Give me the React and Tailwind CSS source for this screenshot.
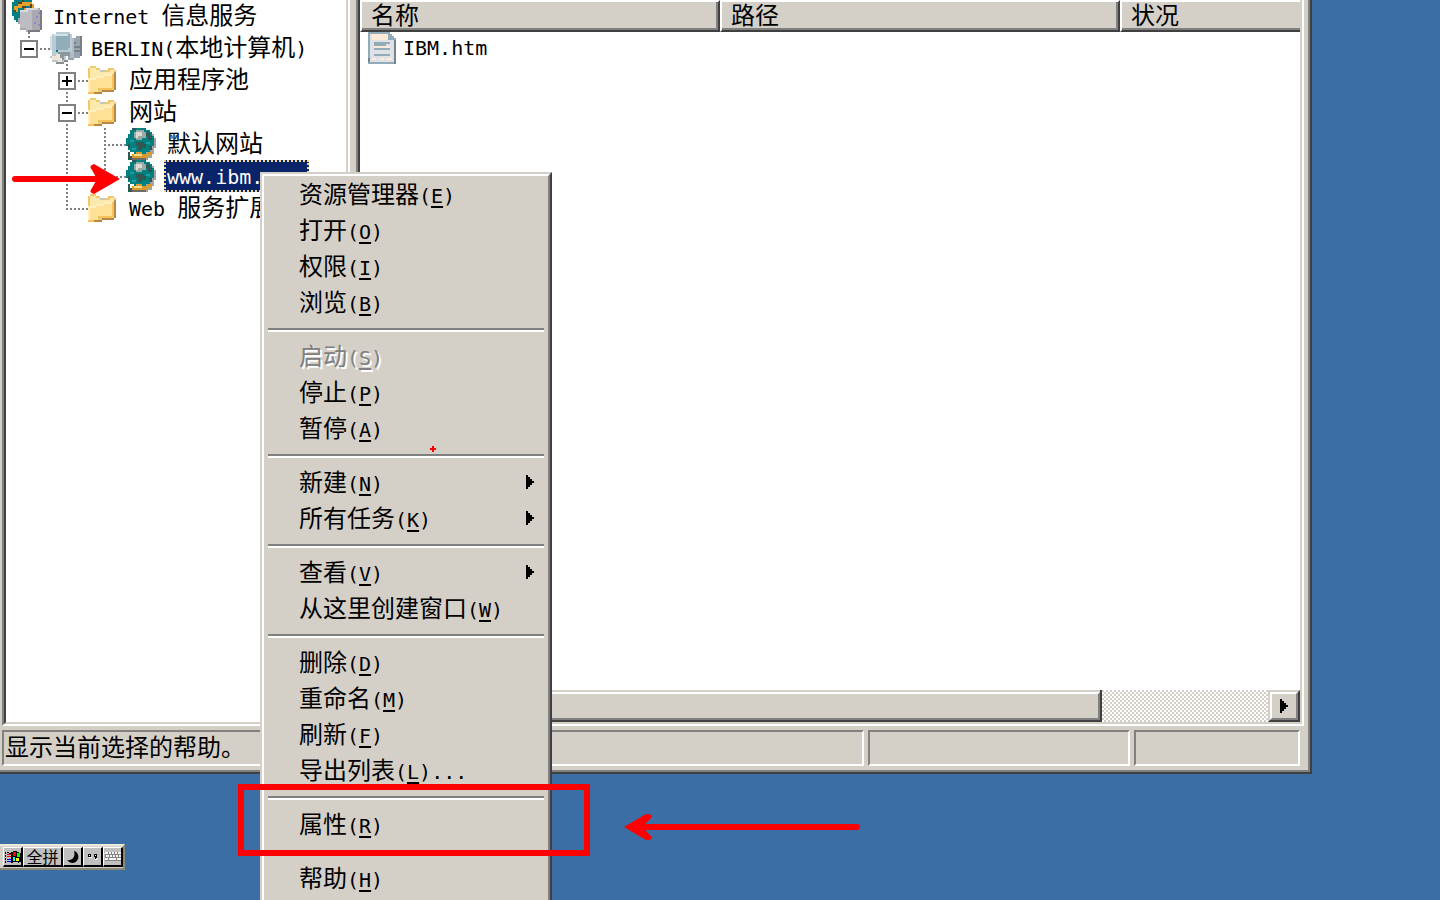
import React, { useState } from "react";

const LATIN = "font-['DejaVu_Sans_Mono','Liberation_Mono',monospace] text-[20px]";

// latin runs take half-width cells, chinese runs take full-width cells
const Mixed = ({ text }) => (
  <>
    {text.split(/([\x20-\x7e]+)/).filter(Boolean).map((part, i) =>
      /^[\x20-\x7e]/.test(part) ? (
        <span key={i} className={`${LATIN} whitespace-pre`}>{part}</span>
      ) : (
        <span key={i}>{part}</span>
      )
    )}
  </>
);

/* ---------- icons ---------- */

const FolderIcon = () => (
  <svg viewBox="0 0 16 16" className="size-8 shrink-0" shapeRendering="crispEdges" aria-hidden="true">
    <path d="M0 2h1V1h3v1h2v1h4V2h3v1h1v10h-1v1H7v1H0z" fill="#f5c76b" />
    <path d="M1 2h3v1h2v1h5V3h2v2H8v1H4v1H1z" fill="#fbe9ae" />
    <path d="M1 7h3V6h4V5h5v7h-2v1H5v1H1z" fill="#fee196" />
    <path d="M0 7h1v7H0zM1 7h3v1H1zM4 6h4v1H4zM8 5h4v1H8z" fill="#fff0bf" />
    <path d="M13 4h1v9h-1zM7 13h6v1H7zM2 14h5v1H2z" fill="#b98846" />
    <path d="M12 5h1v7h-1zM5 12h7v1H5zM0 14h3v1H0z" fill="#f6c25f" />
    <path d="M6 3h3v1H6z" fill="#c9c6bd" />
  </svg>
);

const GlobeIcon = () => (
  <svg viewBox="0 0 16 16" className="size-8 shrink-0" shapeRendering="crispEdges" aria-hidden="true">
    <path d="M10 1h2v1h1v1h1v2h1v5h-1v3h-1v2h-2v1H4v-3h6z" fill="#a3a3a6" />
    <path d="M4 0h6v1h2v1h1v2h1v5h-1v2h-1v1h-2v1H4v-1H2v-1H1V9H0V5h1V3h1V1h2z" fill="#008080" />
    <path d="M3 0h2v1H3zM10 2h2v2h1v2h-2V4h-1zM5 7h4v1h1v2H8v1H6V9H5zM1 8h1v2H1zM12 9h1v2h-1zM1 12h1v4H1zM2 14h1v2H2z" fill="#2f5950" />
    <path d="M4 2h1V1h4v1h1v3H8v1H5V5H4z" fill="#9aa9a4" />
    <path d="M5 2h3v2H6v1H5z" fill="#dddcd4" />
    <path d="M2 6h2v1H2zM10 7h2v1h-2zM3 10h2v1H3z" fill="#1aa0a0" />
    <path d="M3 13h2v-1h3v1h3v-1h2v2h-2v1H3z" fill="#d99a2b" />
    <path d="M4 13h4v1H4z" fill="#f8dc8c" />
    <path d="M3 15h7v1H3z" fill="#6d6d66" />
  </svg>
);

const ServerIcon = () => (
  <svg viewBox="0 0 16 16" className="size-8 shrink-0" shapeRendering="crispEdges" aria-hidden="true">
    <path d="M0 1h1V0h9v2h1v3H4v6H2v-1H1V8H0z" fill="#008080" />
    <path d="M1 5V3h2V2h2V1h5v1h1v2H9V3H7v2H6V4H3v2H2V5z" fill="#e8a02a" />
    <path d="M3 1h2V0h1v1H5v1H3zM5 3h2v1H5zM9 2h1v2H9zM1 5h1v1H1z" fill="#5a4326" />
    <path d="M3 9h1V5h3V4h7v1h1v10h-1v1H7v-1H4v-3H3z" fill="#a9a9af" />
    <path d="M4 6h4V5h2v10H7v-1H4z" fill="#bcbcc2" />
    <path d="M7 4h6v1H8v1H4V5h3z" fill="#d8d8de" />
    <path d="M14 5h1v10h-1zM8 15h6v1H8z" fill="#7b7b82" />
    <path d="M13 6h1v1h-1zM12 8h1v1h-1zM11 11h1v1h-1zM13 12h1v1h-1z" fill="#8d86e0" />
  </svg>
);

const ComputerIcon = () => (
  <svg viewBox="0 0 16 16" className="size-8 shrink-0" shapeRendering="crispEdges" aria-hidden="true">
    <path d="M9 3h4V2h3v10h-1v1h-3v1H9z" fill="#98a4ad" />
    <path d="M15 2h1v10h-1zM12 5h1v1h-1zM12 7h3v1h-3zM12 9h3v1h-3z" fill="#75808a" />
    <path d="M10 3h2v10h-2z" fill="#b0bbc3" />
    <path d="M1 1h2V0h7v1h1v9h-1v2H8v3H6v1H3v-1H1v-2H0v-1h1V9H0V2h1z" fill="#b9cbd3" />
    <path d="M3 2h6V1h1v7H9v1H3z" fill="#92adba" />
    <path d="M0 2h1v7H0zM2 1h7v1H2z" fill="#d5e0e4" />
    <path d="M3 9h1v1H3z" fill="#008080" />
    <path d="M4 10h6v2H7v2H5v-2H4z" fill="#8b989e" />
    <path d="M1 12h2v-1h2v2h1v2H4v-1H1z" fill="#efe5d6" />
    <path d="M3 15h4v-1h2v1H7v1H3z" fill="#8d8d8d" />
  </svg>
);

const PageIcon = () => (
  <svg viewBox="0 0 14 16" className="h-8 w-7 shrink-0" shapeRendering="crispEdges" aria-hidden="true">
    <path d="M0 0h11v1h1v1h1v1h1v13H0z" fill="#92abb8" />
    <path d="M1 1h9v3h3v11H1z" fill="#dfe1e6" />
    <path d="M2 1h8v3H2zM3 7h8v1H3zM2 13h2v1H2zM6 13h2v1H6zM9 13h3v1H9z" fill="#fdebd8" />
    <path d="M3 5h8v2H3zM3 8h8v1H3zM3 11h8v1H3z" fill="#92abb8" />
    <path d="M9 6h2v1H9z" fill="#dfe1e6" />
    <path d="M13 4h1v12h-1z" fill="#75858f" />
    <path d="M0 13h1v2H0z" fill="#75858f" />
  </svg>
);

const RightTriangle = () => (
  <svg viewBox="0 0 4 7" className="h-[14px] w-2" shapeRendering="crispEdges" aria-hidden="true">
    <path d="M0 0h1v1h1v1h1v1h1v1H3v1H2v1H1v1H0z" />
  </svg>
);

/* ---------- tree ---------- */

const GUIDES = {
  blank: [],
  pipe: ["M17 0V32"],
  tee: ["M17 0V32", "M20 17H38"],
  elbow: ["M17 0V17", "M16 17H38"],
  cut: ["M17 0V12", "M20 17H38"],
};

const Guide = ({ kind }) => (
  <svg viewBox="0 0 38 32" className="h-8 w-[38px] shrink-0" shapeRendering="crispEdges" aria-hidden="true">
    {GUIDES[kind].map((d) => (
      <path key={d} d={d} stroke="#808080" strokeWidth="2" strokeDasharray="2 2" fill="none" />
    ))}
  </svg>
);

const Toggle = ({ open, last, label }) => (
  <button type="button" aria-label={label} aria-expanded={open} className="h-8 w-[38px] shrink-0">
    <svg viewBox="0 0 38 32" className="h-8 w-[38px]" shapeRendering="crispEdges">
      <path d={last ? "M17 0V8" : "M17 0V32"} stroke="#808080" strokeWidth="2" strokeDasharray="2 2" />
      <path d="M28 17H38" stroke="#808080" strokeWidth="2" strokeDasharray="2 2" />
      <rect x="9" y="9" width="16" height="16" fill="#fff" stroke="#808080" strokeWidth="2" />
      <path d={open ? "M12 17H22" : "M12 17H22M17 12V22"} stroke="#000" strokeWidth="2" />
    </svg>
  </button>
);

const TREE = [
  { text: "Internet 信息服务", Icon: ServerIcon, guides: [] },
  { text: "BERLIN(本地计算机)", Icon: ComputerIcon, guides: [], open: true, last: true },
  { text: "应用程序池", Icon: FolderIcon, guides: ["blank"], open: false },
  { text: "网站", Icon: FolderIcon, guides: ["blank"], open: true },
  { text: "默认网站", Icon: GlobeIcon, guides: ["blank", "pipe", "tee"] },
  { text: "www.ibm.com", Icon: GlobeIcon, guides: ["blank", "pipe", "cut"] },
  { text: "Web 服务扩展", Icon: FolderIcon, guides: ["blank", "elbow"] },
];

const TreePanel = () => {
  const [selected] = useState("www.ibm.com");

  return (
    <div className="w-[348px] shrink-0 border-2 border-t-0 border-[#808080] border-r-white border-b-white">
      <ul className="h-full overflow-hidden border-2 border-t-0 border-[#404040] border-r-[#d4d0c8] border-b-[#d4d0c8] bg-white pl-[6px]">
        {TREE.map(({ text, Icon, guides, open, last }) => (
          <li key={text} className="flex h-8 items-center">
            {guides.map((kind, i) => (
              <Guide key={i} kind={kind} />
            ))}
            {open !== undefined && <Toggle open={open} last={last} label={text} />}
            <Icon />
            <span
              className={
                text === selected
                  ? "ml-[6px] h-8 border-2 border-dotted border-[#f6d98c] bg-[#0a246a] pr-2 pl-px leading-6 whitespace-nowrap text-white"
                  : "ml-[6px] h-8 px-[3px] leading-7 whitespace-nowrap"
              }
            >
              <Mixed text={text} />
            </span>
          </li>
        ))}
      </ul>
    </div>
  );
};

/* ---------- file list ---------- */

const TH = "h-8 border-t-2 border-b-2 border-l-2 border-t-white border-l-white border-b-[#404040] p-0 text-left font-normal";
const TH_EDGE = "border-r-2 border-r-[#404040]";
const TH_INNER = "block h-7 border-b-2 border-[#808080] pl-[9px] leading-6";

const ListPanel = () => (
  <div className="min-w-0 flex-1 border-2 border-t-0 border-[#808080] border-r-white border-b-white">
    <div className="flex h-full flex-col border-2 border-t-0 border-[#404040] border-r-[#d4d0c8] border-b-[#d4d0c8] bg-white">
      <table className="w-full table-fixed border-separate border-spacing-0">
        <thead className="bg-[#d4d0c8]">
          <tr>
            <th className={`${TH} ${TH_EDGE} w-[360px]`}><span className={`${TH_INNER} border-r-2`}>名称</span></th>
            <th className={`${TH} ${TH_EDGE} w-[400px]`}><span className={`${TH_INNER} border-r-2`}>路径</span></th>
            <th className={TH}><span className={TH_INNER}>状况</span></th>
          </tr>
        </thead>
        <tbody>
          <tr>
            <td className="h-8 p-0">
              <div className="flex h-8 items-center gap-[7px] pl-2">
                <PageIcon />
                <Mixed text="IBM.htm" />
              </div>
            </td>
            <td />
            <td />
          </tr>
        </tbody>
      </table>

      <div className="mt-auto flex h-8 bg-[repeating-conic-gradient(#d4d0c8_0_25%,#ffffff_0_50%)] bg-[length:4px_4px]">
        <div className="w-[742px] border-r-2 border-b-2 border-[#404040]">
          <div className="h-full border-t-2 border-[#d4d0c8]">
            <div className="h-full border-t-2 border-r-2 border-b-2 border-t-white border-r-[#808080] border-b-[#808080] bg-[#d4d0c8]" />
          </div>
        </div>
        <button
          type="button"
          aria-label="向右滚动"
          className="ml-auto size-8 border-2 border-[#d4d0c8] border-r-[#404040] border-b-[#404040]"
        >
          <span className="flex h-full items-center border-2 border-white border-r-[#808080] border-b-[#808080] bg-[#d4d0c8] pl-2">
            <RightTriangle />
          </span>
        </button>
      </div>
    </div>
  </div>
);

const StatusCell = ({ className, children }) => (
  <div className={`h-9 border-2 border-[#808080] border-r-white border-b-white leading-7 ${className}`}>
    {children}
  </div>
);

/* ---------- context menu ---------- */

const MENU = [
  [
    { text: "资源管理器", hot: "E" },
    { text: "打开", hot: "O" },
    { text: "权限", hot: "I" },
    { text: "浏览", hot: "B" },
  ],
  [
    { text: "启动", hot: "S", disabled: true },
    { text: "停止", hot: "P" },
    { text: "暂停", hot: "A" },
  ],
  [
    { text: "新建", hot: "N", sub: true },
    { text: "所有任务", hot: "K", sub: true },
  ],
  [
    { text: "查看", hot: "V", sub: true },
    { text: "从这里创建窗口", hot: "W" },
  ],
  [
    { text: "删除", hot: "D" },
    { text: "重命名", hot: "M" },
    { text: "刷新", hot: "F" },
    { text: "导出列表", hot: "L", more: "..." },
  ],
  [{ text: "属性", hot: "R" }],
  [{ text: "帮助", hot: "H" }],
];

const ContextMenu = () => (
  <div
    role="menu"
    className="absolute top-[172px] left-[260px] w-[292px] border-2 border-[#d4d0c8] border-r-[#404040] border-b-[#404040]"
  >
    <div className="border-2 border-white border-r-[#808080] border-b-[#808080] bg-[#d4d0c8] px-1 py-[2px]">
      {MENU.map((group, g) => (
        <React.Fragment key={g}>
          {g > 0 && <div role="separator" className="mt-[6px] mb-2 h-1 border-t-2 border-b-2 border-t-[#808080] border-b-white" />}
          {group.map(({ text, hot, disabled, sub, more }) => (
            <button
              key={text}
              type="button"
              role="menuitem"
              disabled={disabled}
              className="flex h-9 w-full items-center pr-[10px] pb-1 pl-[31px] text-left leading-8 whitespace-nowrap disabled:text-[#808080] disabled:[text-shadow:2px_2px_0_#fff]"
            >
              <span>
                {text}
                <span className={LATIN}>
                  (<span className="underline decoration-2 underline-offset-[3px]">{hot}</span>){more}
                </span>
              </span>
              {sub && <span className="ml-auto"><RightTriangle /></span>}
            </button>
          ))}
        </React.Fragment>
      ))}
    </div>
  </div>
);

/* ---------- input method bar ---------- */

const IME_BTN =
  "flex h-5 items-center justify-center border-t border-r-2 border-b-2 border-l border-t-white border-l-white border-r-black border-b-black bg-[#c0c0c0]";

const ImeBar = () => (
  <div className="flex w-[125px] border-2 border-l-0 border-[#ece9d8] border-r-[#8b8878] border-b-[#8b8878] bg-[#d4d0c8] py-px pl-[3px]">
    <button type="button" aria-label="输入法" className={`${IME_BTN} w-5`}>
      <svg viewBox="0 0 16 14" className="h-[14px] w-4 shrink-0" shapeRendering="crispEdges">
        <path d="M6 2h2V1h4v1h2v1h2v9h-2v1h-1v-1H8v1H6z" />
        <path d="M8 2h3v4H8z" fill="#f00" />
        <path d="M12 3h3v4h-3z" fill="#0f0" />
        <path d="M8 7h2v4H8z" fill="#0ff" />
        <path d="M11 8h3v3h-3z" fill="#ff0" />
        <path d="M2 4h4v1H2zM2 6h4v1H2z" fill="#f00" />
        <path d="M2 9h4v1H2zM2 11h4v1H2z" fill="#00f" />
        <path d="M0 2h1v2H0zM0 5h1v2H0zM0 8h1v2H0zM0 11h1v2H0zM2 2h2v1H2zM4 3h2v1H4z" />
      </svg>
    </button>
    <button type="button" className={`${IME_BTN} w-10 pb-px text-[16px] leading-4`}>全拼</button>
    <button type="button" aria-label="半角" className={`${IME_BTN} w-5`}>
      <svg viewBox="0 0 12 12" className="size-3"><path d="M7 0c4 1 5 5 4 8-2 5-8 5-11 1 4 1 9-2 7-9z" /></svg>
    </button>
    <button type="button" aria-label="中文标点" className={`${IME_BTN} w-5`}>
      <svg viewBox="0 0 12 8" className="h-2 w-3" shapeRendering="crispEdges">
        <path d="M1 1h3v3H1zM7 1h3v4H9v1H8V4H7z" />
        <path d="M2 2h1v1H2zM8 2h1v1H8zM2 4h3v1H2zM10 5h1v1h-1v1H8V6h2z" fill="#fff" />
      </svg>
    </button>
    <button type="button" aria-label="软键盘" className={`${IME_BTN} w-5`}>
      <svg viewBox="0 0 16 10" className="h-[10px] w-4 shrink-0" shapeRendering="crispEdges">
        <path d="M0 0h16v10H0z" fill="#858585" />
        <path d="M0 0h3v2H0zM4 0h2v2H4zM7 0h2v2H7zM10 0h2v2h-2zM13 0h3v2h-3zM1 3h3v2H1zM5 3h2v2H5zM8 3h2v2H8zM11 3h2v2h-2zM14 3h2v2h-2zM0 6h3v2H0zM4 6h7v2H4zM12 6h4v2h-4z" fill="#f4f4f4" />
        <path d="M0 9h16v1H0z" fill="#c0c0c0" />
      </svg>
    </button>
  </div>
);

/* ---------- red marks ---------- */

const Marks = () => (
  <>
    <svg viewBox="0 0 108 32" className="absolute top-[163px] left-3 h-8 w-[108px]" aria-hidden="true">
      <path d="M3 16H98" stroke="#f00" strokeWidth="6" strokeLinecap="round" />
      <path d="M108 16 82 31q-6-2-2-6l5-9-5-9q-4-4 2-6z" fill="#f00" />
    </svg>
    <svg viewBox="0 0 236 28" className="absolute top-[813px] left-[624px] h-7 w-[236px]" aria-hidden="true">
      <path d="M12 14H233" stroke="#f00" strokeWidth="6" strokeLinecap="round" />
      <path d="M0 14 22 1q8 0 5 4l-5 5v8l5 5q3 4-5 4z" fill="#f00" />
    </svg>
    <svg viewBox="0 0 3 3" className="absolute top-[446px] left-[430px] size-[6px]" shapeRendering="crispEdges" aria-hidden="true">
      <path d="M1 0h1v1h1v1H2v1H1V2H0V1h1z" fill="#f00" />
    </svg>
    <div className="absolute top-[784px] left-[238px] h-[72px] w-[352px] border-[6px] border-[#ff0000]" />
  </>
);

const App = () => {
  return (
    <div className="relative flex h-screen flex-col overflow-hidden bg-[#3a6ea5] font-['Noto_Sans_CJK_SC',sans-serif] text-[24px] text-black">
      <main className="mr-32 flex min-h-0 flex-1 flex-col border-r-2 border-b-2 border-[#404040]">
        <div className="flex min-h-0 flex-1 flex-col border-r-2 border-b-2 border-[#808080] bg-[#d4d0c8] pb-1">
          <div className="flex min-h-0 flex-1 gap-[6px] pr-1 pl-[2px]">
            <TreePanel />
            <ListPanel />
          </div>
          <footer className="mt-1 flex gap-1 pr-2 pl-[2px]">
            <StatusCell className="flex-1 pl-px">显示当前选择的帮助。</StatusCell>
            <StatusCell className="w-[262px]" />
            <StatusCell className="w-[166px]" />
          </footer>
        </div>
      </main>

      <div className="h-[126px] shrink-0 pt-[70px]">
        <ImeBar />
      </div>

      <ContextMenu />
      <Marks />
    </div>
  );
};

export default App;
